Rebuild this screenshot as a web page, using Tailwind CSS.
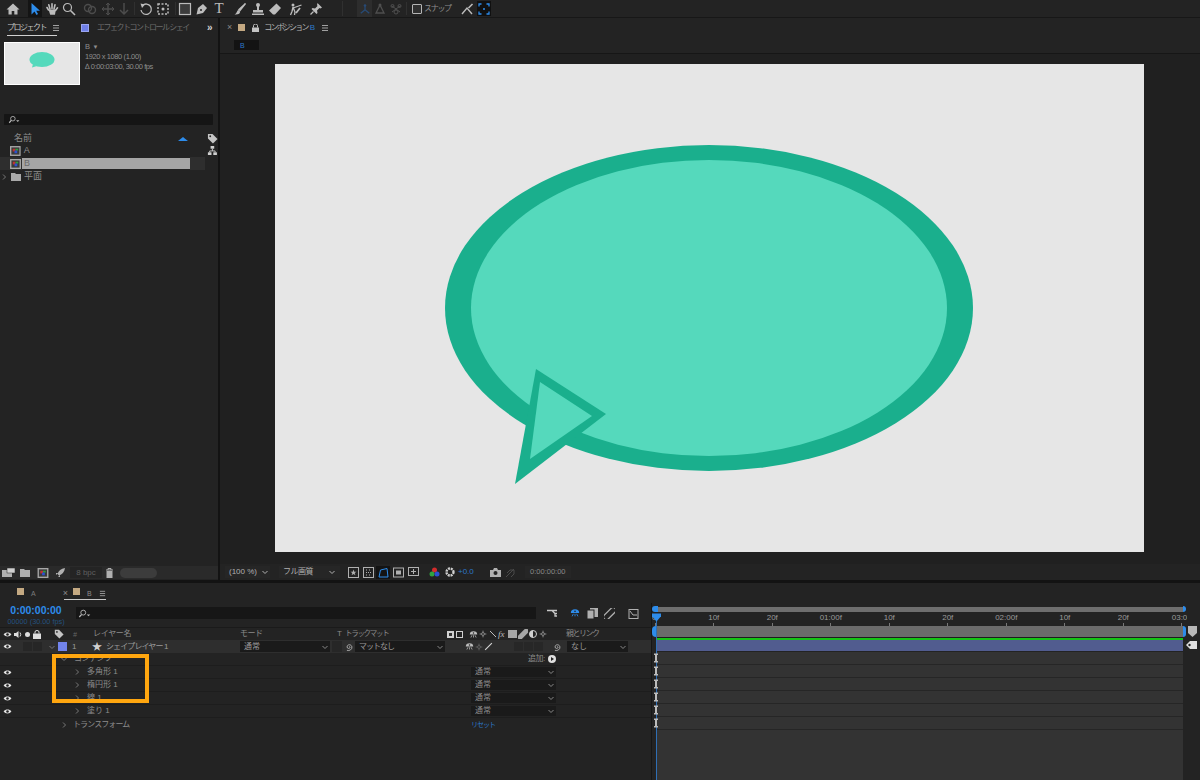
<!DOCTYPE html>
<html lang="ja">
<head>
<meta charset="UTF-8">
<title>After Effects</title>
<script src="https://cdn.jsdelivr.net/npm/@tailwindcss/browser@4"></script>
</head>
<body class="w-[1200px] h-[780px] overflow-hidden bg-[#232323] text-[#a0a0a0] text-[8px] leading-none font-['Liberation_Sans','Noto_Sans_CJK_JP',sans-serif] flex flex-col">

<!-- shared icons -->
<svg class="hidden">
  <symbol id="eye" viewBox="0 0 14 14"><path d="M1 7C3.500 3 10.500 3 13 7C10.500 11 3.500 11 1 7Z" fill="currentColor"/><circle cx="7" cy="7" r="2" fill="#222"/></symbol>
  <symbol id="chev" viewBox="0 0 8 8"><path d="M3 1.500L5.500 4L3 6.500" fill="none" stroke="currentColor"/></symbol>
  <symbol id="down" viewBox="0 0 8 8"><path d="M1.500 3L4 5.500L6.500 3" fill="none" stroke="currentColor"/></symbol>
  <symbol id="menu" viewBox="0 0 8 8"><path d="M1 1.500H7M1 4H7M1 6.500H7" stroke="currentColor"/></symbol>
  <symbol id="spiral" viewBox="0 0 12 12"><path d="M6 6C7 5 8 6.500 6.500 7.500C4.500 8.500 3 6.500 4 4.500C5.500 2.500 9 3 9.500 6C9.800 9 6.500 11 3.500 10" fill="none" stroke="currentColor"/></symbol>
  <symbol id="shy" viewBox="0 0 12 12"><path d="M1 6A5 4.500 0 0 1 11 6Z" fill="currentColor"/><path d="M4 7L2.500 10M8 7L9.500 10M6 7V10" stroke="currentColor"/><circle cx="6" cy="4" r="1" fill="#222"/></symbol>
  <symbol id="sun" viewBox="0 0 12 12"><circle cx="6" cy="6" r="2.200" fill="none" stroke="currentColor"/><path d="M6 1V3M6 9V11M1 6H3M9 6H11" stroke="currentColor"/></symbol>
  <symbol id="search" viewBox="0 0 16 10"><circle cx="6" cy="4" r="2.800" fill="none" stroke="currentColor"/><path d="M4 6.200L1.500 9" stroke="currentColor" stroke-width="1.400"/><path d="M10 6H14L12 8Z" fill="currentColor"/></symbol>
  <symbol id="comp" viewBox="0 0 12 11"><rect width="12" height="11" fill="#a8a8a8"/><rect x="1.500" y="1.500" width="9" height="8" fill="#3a3a3a"/><rect x="3" y="3" width="3" height="3" fill="#c03030"/><rect x="6" y="3" width="3" height="2" fill="#2f9f3f"/><rect x="5" y="5" width="3" height="3" fill="#2c50d0"/></symbol>
  <symbol id="key" viewBox="0 0 6 10"><path d="M1 .5H5V2H4V8H5V9.500H1V8H2V2H1Z" fill="currentColor"/></symbol>
</svg>

<!-- tool bar -->
<div class="h-[17px] shrink-0 flex items-center text-[#bcbcbc] border-b border-[#171717] box-content">
  <svg class="ml-[6px] w-[14px] h-[14px]" viewBox="0 0 14 14"><path d="M7 1.500L13.500 7.500H11.500V12.500H8.300V9H5.700V12.500H2.500V7.500H.5Z" fill="currentColor"/></svg>
  <span class="ml-[8px] w-[14px] h-[17px] bg-[#141414] flex items-center justify-center">
    <svg class="w-[14px] h-[14px]" viewBox="0 0 14 14"><path d="M3.500 1V12.500L6.500 9.500L8.500 13L10 12L8.200 8.800H12Z" fill="#2d8ceb"/></svg>
  </span>
  <svg class="ml-[3px] w-[14px] h-[14px]" viewBox="0 0 14 14"><path d="M3.500 8L2 5.500M5 7L3.800 2.800M7 6.500V1.800M9 7L10 2.800M10.500 8.500L12.500 5.800" stroke="currentColor" stroke-width="1.600" stroke-linecap="round"/><path d="M3.500 7.500H10.800L10 12.800H5.200Z" fill="currentColor"/></svg>
  <svg class="ml-[3px] w-[14px] h-[14px]" viewBox="0 0 14 14"><circle cx="5.500" cy="5.500" r="4" fill="none" stroke="currentColor" stroke-width="1.200"/><path d="M8.500 8.500L13 13" stroke="currentColor" stroke-width="1.600"/></svg>
  <svg class="ml-[7px] w-[14px] h-[14px] text-[#4c4c4c]" viewBox="0 0 14 14"><circle cx="5" cy="6" r="3.500" fill="none" stroke="currentColor" stroke-width="1.400"/><circle cx="9" cy="8" r="3.500" fill="none" stroke="currentColor" stroke-width="1.400"/></svg>
  <svg class="ml-[4px] w-[14px] h-[14px] text-[#4c4c4c]" viewBox="0 0 14 14"><path d="M7 1V13M1 7H13" stroke="currentColor" stroke-width="1.500"/><path d="M5 3L7 1L9 3M5 11L7 13L9 11M3 5L1 7L3 9M11 5L13 7L11 9" fill="none" stroke="currentColor"/></svg>
  <svg class="ml-[2px] w-[14px] h-[14px] text-[#4c4c4c]" viewBox="0 0 14 14"><path d="M7 1V11M3 8L7 12L11 8" fill="none" stroke="currentColor" stroke-width="1.500"/></svg>
  <div class="ml-[3px] w-px h-[13px] bg-[#303030]"></div>
  <svg class="ml-[4px] w-[14px] h-[14px]" viewBox="0 0 14 14"><path d="M3.500 3.500A5.200 5.200 0 1 1 2 8" fill="none" stroke="currentColor" stroke-width="1.300"/><path d="M1.500 1.500L6 2.500L3 6Z" fill="currentColor"/></svg>
  <svg class="ml-[3px] w-[14px] h-[14px]" viewBox="0 0 14 14"><rect x="2" y="2" width="10" height="10" fill="none" stroke="currentColor" stroke-width="1.500" stroke-dasharray="2 1.500"/><circle cx="7" cy="7" r="1.500" fill="currentColor"/></svg>
  <div class="ml-[5px] w-px h-[13px] bg-[#303030]"></div>
  <svg class="ml-[2px] w-[14px] h-[14px]" viewBox="0 0 14 14"><rect x="1.500" y="1.500" width="11" height="11" fill="#3c3c3c" stroke="currentColor" stroke-width="1.200"/></svg>
  <svg class="ml-[3px] w-[14px] h-[14px]" viewBox="0 0 14 14"><path d="M1.500 12.500L3 6L8 2L12 6L8 11Z" fill="currentColor"/><circle cx="6" cy="8" r="1" fill="#222"/></svg>
  <span class="ml-[3px] w-[14px] text-center text-[15px] font-['Liberation_Serif',serif]">T</span>
  <svg class="ml-[7px] w-[14px] h-[14px]" viewBox="0 0 14 14"><path d="M12.500 1.500L6 7.500L7 8.500Z" fill="currentColor" stroke="currentColor" stroke-width="1.400"/><path d="M5.500 8C3.500 8.500 4.500 11 1.500 12.500C5 13 7.500 11.500 7 9.500Z" fill="currentColor"/></svg>
  <svg class="ml-[4px] w-[14px] h-[14px]" viewBox="0 0 14 14"><circle cx="7" cy="3" r="2" fill="currentColor"/><path d="M6 4H8V8H12V10.500H2V8H6ZM1 11.500H13V13H1Z" fill="currentColor"/></svg>
  <svg class="ml-[3px] w-[14px] h-[14px]" viewBox="0 0 14 14"><path d="M8.500 1.500L13 6L7 12.500H5L1 8.500Z" fill="currentColor"/></svg>
  <svg class="ml-[7px] w-[14px] h-[14px]" viewBox="0 0 14 14"><circle cx="4" cy="3" r="1.500" fill="currentColor"/><path d="M4 5L3 9.500L1.500 13M4 5L6 10L5.500 13M4 6L12.500 3" fill="none" stroke="currentColor" stroke-width="1.300"/><path d="M7 11L11 6" stroke="currentColor" stroke-width="1.800"/></svg>
  <svg class="ml-[6px] w-[14px] h-[14px]" viewBox="0 0 14 14"><path d="M8.500 1L13 5.500L11.500 6.500L10.500 6L8 8.500L8.500 11L7.500 12L2.500 7L3.500 6L6 6.500L8.500 4L8 3Z" fill="currentColor"/><path d="M4.500 9.500L1.500 12.500" stroke="currentColor" stroke-width="1.300"/></svg>
  <div class="ml-[19px] w-px h-[15px] bg-[#303030]"></div>
  <span class="ml-[14px] w-[15px] h-[17px] bg-[#2d2d2d] flex items-center justify-center">
    <svg class="w-[12px] h-[12px] text-[#274a75]" viewBox="0 0 14 14"><path d="M7 3V8L2 12M7 8L12 12" fill="none" stroke="currentColor" stroke-width="1.500"/><circle cx="7" cy="3" r="1.500" fill="currentColor"/></svg>
  </span>
  <svg class="ml-[1px] w-[14px] h-[14px] text-[#4f4f4f]" viewBox="0 0 14 14"><path d="M7 3L3 11H11Z" fill="none" stroke="currentColor" stroke-width="1.300"/><circle cx="7" cy="3" r="1.500" fill="currentColor"/></svg>
  <svg class="ml-[2px] w-[14px] h-[14px] text-[#4f4f4f]" viewBox="0 0 14 14"><path d="M3 4L11 10M11 4L3 10" stroke="currentColor"/><circle cx="3.500" cy="4" r="1.500" fill="none" stroke="currentColor"/><circle cx="10.500" cy="4" r="1.500" fill="none" stroke="currentColor"/><circle cx="7" cy="10" r="2" fill="none" stroke="currentColor"/></svg>
  <div class="ml-[3px] w-px h-[13px] bg-[#303030]"></div>
  <span class="ml-[5px] w-[10px] h-[10px] border-[1.500px] border-[#b5b5b5] rounded-[1px] bg-[#303030]"></span>
  <span class="ml-[2px] text-[8px] tracking-[-1.300px] text-[#8c8c8c]">スナップ</span>
  <svg class="ml-[9px] w-[14px] h-[14px]" viewBox="0 0 14 14"><path d="M2 12L7 6L12 12" fill="none" stroke="currentColor" stroke-width="1.400"/><path d="M8.500 6L12.500 2" stroke="currentColor" stroke-width="1.600"/></svg>
  <span class="ml-[3px] w-[14px] h-[15px] bg-[#101010] flex items-center justify-center">
    <svg class="w-[12px] h-[12px] text-[#2d8ceb]" viewBox="0 0 12 12"><path d="M1 3.500V1H3.500M8.500 1H11V3.500M1 8.500V11H3.500M8.500 11H11V8.500" fill="none" stroke="currentColor" stroke-width="1.300"/><circle cx="6" cy="6" r="1" fill="currentColor"/></svg>
  </span>
</div>

<!-- project panel + viewer -->
<div class="h-[562px] shrink-0 flex">
  <div class="w-[218px] shrink-0 flex flex-col">
    <div class="h-[19px] flex items-center relative">
      <span class="ml-[7px] w-[45px] text-[#c4c4c4] tracking-[-1.500px]">プロジェクト</span>
      <svg class="w-[8px] h-[8px]"><use href="#menu"/></svg>
      <span class="absolute left-[7px] top-[17px] w-[50px] h-px bg-[#d0d0d0]"></span>
      <span class="ml-[21px] w-[8px] h-[8px] bg-[#6f7fe8] border border-[#9aa5f0]"></span>
      <span class="ml-[8px] w-[94px] whitespace-nowrap text-[#6c6c6c] tracking-[-1.500px]">エフェクトコントロール シェイ</span>
      <span class="ml-[16px] text-[#d0d0d0] text-[10px] font-bold tracking-[-1px]">»</span>
    </div>
    <div class="mt-[5px] flex">
      <div class="ml-[4px] w-[76px] h-[43px] bg-[#e6e6e6] border border-white flex items-center justify-center">
        <svg class="w-[26px] h-[17px] -mt-[6px]" viewBox="0 0 26 17"><path d="M4 12L3 15.500L8 14Z" fill="#55d9bc"/><ellipse cx="13" cy="7.500" rx="12.500" ry="7.500" fill="#55d9bc"/></svg>
      </div>
      <div class="ml-[5px] flex flex-col text-[7.500px] tracking-[-.4px] text-[#8e8e8e]">
        <span class="h-[10px] flex items-center">B <span class="ml-[3px] text-[6px]">▼</span></span>
        <span class="h-[10px] flex items-center">1920 x 1080 (1.00)</span>
        <span class="h-[10px] flex items-center">∆ 0:00:03:00, 30.00 fps</span>
      </div>
    </div>
    <div class="mt-[29px] ml-[4px] w-[209px] h-[11px] bg-[#151515] rounded-[1px] flex items-center text-[#bdbdbd]">
      <svg class="ml-[4px] w-[13px] h-[9px]"><use href="#search"/></svg>
    </div>
    <div class="mt-[7px] h-[12px] flex items-center">
      <span class="ml-[14px] text-[9px] text-[#8a8a8a] w-[165px]">名前</span>
      <svg class="w-[10px] h-[5px]" viewBox="0 0 10 5"><path d="M0 5H10L5 1Z" fill="#2d8ceb"/></svg>
      <svg class="ml-[19px] w-[11px] h-[11px] shrink-0 text-[#c4c4c4]" viewBox="0 0 12 12"><path d="M1 1H6L11.500 6.500L6.500 11.500L1 6Z" fill="currentColor"/><circle cx="3.500" cy="3.500" r="1" fill="#222"/></svg>
    </div>
    <div class="h-[13px] flex items-center">
      <svg class="ml-[10px] w-[11px] h-[10px]"><use href="#comp"/></svg>
      <span class="ml-[3px] w-[187px] text-[#8e8e8e] text-[9px]">A</span>
      <svg class="w-[11px] h-[11px] text-[#d0d0d0]" viewBox="0 0 12 12"><rect x="4" y="1" width="4" height="3" fill="currentColor"/><rect x="1" y="8" width="4" height="3" fill="currentColor"/><rect x="7" y="8" width="4" height="3" fill="currentColor"/><path d="M6 4V6.500M3 8V6.500H9V8" fill="none" stroke="currentColor"/></svg>
    </div>
    <div class="h-[13px] w-[205px] flex items-center bg-[#2e2e2e]">
      <svg class="ml-[10px] w-[11px] h-[10px]"><use href="#comp"/></svg>
      <span class="ml-[1px] w-[168px] h-[13px] pl-[2px] bg-[#a5a5a5] border-y border-[#232323] text-[#6a6a6a] text-[9px] flex items-center">B</span>
    </div>
    <div class="h-[13px] flex items-center">
      <svg class="ml-[0px] w-[8px] h-[8px] text-[#777]"><use href="#chev"/></svg>
      <svg class="ml-[3px] w-[10px] h-[9px] text-[#a9a9a9]" viewBox="0 0 10 9"><path d="M0 1H4L5 2H10V9H0Z" fill="currentColor"/></svg>
      <span class="ml-[3px] text-[9px] text-[#8e8e8e]">平面</span>
    </div>
    <!-- panel footer -->
    <div class="mt-auto h-[13px] mb-[1px] flex items-center bg-[#2a2a2a] text-[#b0b0b0]">
      <svg class="ml-[2px] w-[13px] h-[9px]" viewBox="0 0 13 9"><rect y="2" width="10" height="7" fill="currentColor"/><rect x="5" width="8" height="5" fill="#d0d0d0" stroke="#222" stroke-width=".5"/></svg>
      <svg class="ml-[5px] w-[10px] h-[9px]" viewBox="0 0 10 9"><path d="M0 1H4L5 2H10V9H0Z" fill="currentColor"/></svg>
      <svg class="ml-[7px] w-[12px] h-[10px]"><use href="#comp"/></svg>
      <svg class="ml-[6px] w-[10px] h-[10px]" viewBox="0 0 10 10"><path d="M10 0C6 .5 3.500 3 2.500 6L4 7.500C7 6.500 9.500 4 10 0ZM1 5H3L1 7ZM5 9V7L3 9Z" fill="currentColor"/></svg>
      <span class="ml-[5px] w-[32px] h-[11px] bg-[#242424] text-[#5f5f5f] flex items-center justify-center">8 bpc</span>
      <svg class="ml-[3px] w-[9px] h-[10px]" viewBox="0 0 9 10"><path d="M1 2H8M3 2V.5H6V2" fill="none" stroke="currentColor"/><path d="M1.500 3H7.500V10H1.500Z" fill="currentColor"/></svg>
      <span class="ml-[6px] w-[37px] h-[10px] rounded-full bg-[#3c3c3c]"></span>
    </div>
  </div>

  <div class="w-[2px] shrink-0 bg-[#131313]"></div>

  <div class="flex-1 flex flex-col">
    <div class="h-[19px] flex items-center">
      <span class="ml-[7px] text-[#8a8a8a] text-[9px]">×</span>
      <span class="ml-[6px] w-[7px] h-[7px] bg-[#c4a982]"></span>
      <svg class="ml-[7px] w-[7px] h-[8px] text-[#c4c4c4]" viewBox="0 0 7 8"><rect y="3.500" width="7" height="4.500" fill="currentColor"/><path d="M1.500 3.500V1.500A2 1.500 0 0 1 5.500 1.500V3.500" fill="none" stroke="currentColor"/></svg>
      <span class="ml-[5px] text-[#b4b4b4] tracking-[-1.800px]">コンポジション</span>
      <span class="ml-[2px] text-[#2d78c8]">B</span>
      <svg class="ml-[6px] w-[8px] h-[8px]"><use href="#menu"/></svg>
    </div>
    <div class="h-[17px] border-b border-[#161616] flex items-center">
      <span class="ml-[14px] w-[25px] h-[10px] bg-[#131313] text-[#2d78c8] text-[7px] pl-[6px] flex items-center">B</span>
    </div>
    <div class="flex-1 bg-[#202020] pt-[10px] pl-[55px]">
      <svg class="w-[869px] h-[488px] bg-[#e6e6e6]" viewBox="0 0 869 488">
        <ellipse cx="434" cy="244" rx="264" ry="163" fill="#1aaf8d"/>
        <ellipse cx="434" cy="244" rx="238" ry="148" fill="#55d9bc"/>
        <polygon points="261,305 331,350 240,420" fill="#1aaf8d"/>
        <polygon points="265,318 317,352 255,395" fill="#55d9bc"/>
      </svg>
    </div>
    <!-- viewer footer -->
    <div class="h-[16px] shrink-0 flex items-center text-[#b0b0b0] bg-[#232323]">
      <span class="ml-[5px] w-[45px] h-[12px] bg-[#262626] pl-[4px] flex items-center justify-between text-[8px]">(100 %)<svg class="w-[8px] h-[8px] mr-[1px]"><use href="#down"/></svg></span>
      <span class="ml-[9px] w-[61px] h-[12px] bg-[#262626] pl-[4px] flex items-center justify-between tracking-[-.5px]">フル画質<svg class="w-[8px] h-[8px] mr-[4px]"><use href="#down"/></svg></span>
      <svg class="ml-[8px] w-[11px] h-[11px]" viewBox="0 0 11 11"><rect x=".5" y=".5" width="10" height="10" fill="none" stroke="currentColor"/><path d="M5.500 2.500L6.300 4.700H8.500L6.700 6L7.400 8.300L5.500 7L3.600 8.300L4.300 6L2.500 4.700H4.700Z" fill="currentColor"/></svg>
      <svg class="ml-[4px] w-[11px] h-[11px]" viewBox="0 0 11 11"><rect x=".5" y=".5" width="10" height="10" fill="none" stroke="currentColor"/><path d="M3 3H5M6 3H8M3 5.500H8M3 8H5M6 8H8" stroke="currentColor" stroke-dasharray="1 1"/></svg>
      <span class="ml-[2px] w-[14px] h-[13px] bg-[#141414] flex items-center justify-center"><svg class="w-[11px] h-[11px] text-[#2d8ceb]" viewBox="0 0 11 11"><path d="M1 10L2.500 3L9 1.500L10 10Z" fill="none" stroke="currentColor"/></svg></span>
      <svg class="ml-[3px] w-[11px] h-[11px]" viewBox="0 0 11 11"><rect x=".5" y="1" width="10" height="9" fill="none" stroke="currentColor"/><rect x="3" y="3.500" width="5" height="4" fill="currentColor"/></svg>
      <svg class="ml-[4px] w-[11px] h-[11px]" viewBox="0 0 11 11"><rect x=".5" y=".5" width="10" height="8" fill="none" stroke="currentColor"/><path d="M5.500 2V7M3 4.500H8" stroke="currentColor"/></svg>
      <svg class="ml-[10px] w-[11px] h-[11px]" viewBox="0 0 11 11"><circle cx="5.500" cy="3" r="2.500" fill="#d32c2c"/><circle cx="3" cy="7" r="2.500" fill="#2fa33f"/><circle cx="8" cy="7" r="2.500" fill="#2c50d0"/></svg>
      <svg class="ml-[5px] w-[10px] h-[10px] text-[#d0d0d0]" viewBox="0 0 10 10"><circle cx="5" cy="5" r="3.500" fill="none" stroke="currentColor" stroke-width="2.400" stroke-dasharray="2 .8"/></svg>
      <span class="ml-[3px] text-[#2d78c8]">+0.0</span>
      <svg class="ml-[16px] w-[11px] h-[9px]" viewBox="0 0 11 9"><path d="M0 2H3L4 0H7L8 2H11V9H0Z" fill="currentColor"/><circle cx="5.500" cy="5" r="2" fill="#232323"/></svg>
      <svg class="ml-[4px] w-[11px] h-[11px] text-[#4a4a4a]" viewBox="0 0 11 11"><path d="M1 10L9 2M2 6L5 3H9V7L6 10" fill="none" stroke="currentColor"/></svg>
      <span class="ml-[9px] w-[46px] h-[12px] bg-[#262626] text-[#8a8a8a] text-[7.500px] flex items-center justify-center">0:00:00:00</span>
    </div>
  </div>
</div>

<div class="h-[3px] shrink-0 bg-[#131313]"></div>

<!-- timeline tabs -->
<div class="h-[20px] shrink-0 flex items-center relative">
  <span class="ml-[17px] w-[7px] h-[7px] bg-[#c4a982] -mt-[3px]"></span>
  <span class="ml-[7px] text-[#7c7c7c] text-[7px]">A</span>
  <span class="ml-[27px] text-[#8a8a8a] text-[9px]">×</span>
  <span class="ml-[5px] w-[7px] h-[7px] bg-[#c4a982] -mt-[3px]"></span>
  <span class="ml-[7px] text-[#8a8a8a] text-[7px]">B</span>
  <svg class="ml-[7px] w-[7px] h-[7px]"><use href="#menu"/></svg>
  <span class="absolute left-[64px] top-[16px] w-[42px] h-px bg-[#c8c8c8]"></span>
</div>

<div class="flex-1 flex relative">
  <!-- layer outline -->
  <div class="w-[651px] shrink-0 flex flex-col">
    <div class="h-[24px] flex">
      <div class="w-[76px] flex flex-col items-center -ml-[0px]">
        <span class="mt-[1px] h-[13px] pr-[4px] flex items-center text-[#2d8ceb] text-[10.500px] font-bold">0:00:00:00</span>
        <span class="h-[9px] pr-[4px] flex items-center text-[#23527f] text-[7.300px] whitespace-nowrap">00000 (30.00 fps)</span>
      </div>
      <div class="mt-[4px] w-[460px] h-[12px] bg-[#161616] flex items-center text-[#bdbdbd]">
        <svg class="ml-[2px] w-[14px] h-[9px]"><use href="#search"/></svg>
      </div>
      <svg class="ml-[10px] mt-[5px] w-[12px] h-[10px] text-[#c8c8c8]" viewBox="0 0 12 10"><path d="M1 2.500H6L9 5.500H11M6 2.500H11M9 5.500V8H11" fill="none" stroke="currentColor" stroke-width="1.300"/></svg>
      <svg class="ml-[11px] mt-[5px] w-[12px] h-[10px] text-[#2d8ceb]"><use href="#shy"/></svg>
      <svg class="ml-[6px] mt-[5px] w-[11px] h-[11px] text-[#b0b0b0]" viewBox="0 0 11 11"><rect x="3" y="0" width="8" height="9" fill="currentColor"/><rect x="0" y="2" width="7" height="9" fill="currentColor" stroke="#232323"/></svg>
      <svg class="ml-[6px] mt-[5px] w-[11px] h-[11px] text-[#b0b0b0]" viewBox="0 0 11 11"><rect x="-2" y="3" width="15" height="5.500" rx="2.700" transform="rotate(-45 5.500 5.500)" fill="none" stroke="currentColor" stroke-width="1.300"/></svg>
      <svg class="ml-[13px] mt-[5px] w-[11px] h-[11px] text-[#b0b0b0]" viewBox="0 0 11 11"><rect x="1" y="1.500" width="9" height="9" fill="none" stroke="currentColor"/><path d="M2 3L5 7H9" fill="none" stroke="currentColor"/></svg>
    </div>
    <!-- column header -->
    <div class="h-[13px] flex items-center text-[#8a8a8a] border-t border-[#1a1a1a]">
      <svg class="ml-[3px] w-[9px] h-[9px] text-[#ddd]"><use href="#eye"/></svg>
      <svg class="ml-[1px] w-[9px] h-[9px] text-[#ddd]" viewBox="0 0 9 9"><path d="M1 3H3L5.500 1V8L3 6H1Z" fill="currentColor"/><path d="M7 2.500Q8.500 4.500 7 6.500" fill="none" stroke="currentColor"/></svg>
      <span class="ml-[3px] w-[5px] h-[5px] rounded-full bg-[#ddd]"></span>
      <svg class="ml-[3px] w-[8px] h-[9px] text-[#ddd]" viewBox="0 0 8 9"><rect y="3.500" width="8" height="5.500" fill="currentColor"/><path d="M2 3.500V2A2 1.500 0 0 1 6 2V3.500" fill="none" stroke="currentColor"/></svg>
      <svg class="ml-[13px] w-[10px] h-[10px] text-[#c4c4c4]" viewBox="0 0 12 12"><path d="M1 1H6L11.500 6.500L6.500 11.500L1 6Z" fill="currentColor"/><circle cx="3.500" cy="3.500" r="1" fill="#222"/></svg>
      <span class="ml-[9px] w-[5px] text-[7px] text-[#666] italic">#</span>
      <span class="ml-[15px] w-[147px] tracking-[-.3px]">レイヤー名</span>
      <span class="w-[97px] tracking-[-.5px]">モード</span>
      <span class="w-[8px] text-[#8a8a8a]">T</span>
      <span class="w-[102px] text-[7.500px] tracking-[-1.300px]">トラックマット</span>
      <span class="w-[7px] h-[7px] border-[2px] border-[#d0d0d0] bg-[#333]"></span>
      <span class="ml-[2px] w-[7px] h-[7px] border border-[#d0d0d0]"></span>
      <svg class="ml-[6px] w-[9px] h-[9px] text-[#bdbdbd]"><use href="#shy"/></svg>
      <svg class="ml-[1px] w-[8px] h-[8px] text-[#bdbdbd]"><use href="#sun"/></svg>
      <svg class="ml-[2px] w-[8px] h-[8px] text-[#bdbdbd]" viewBox="0 0 8 8"><path d="M1 1L7 7" stroke="currentColor"/></svg>
      <span class="ml-[1px] w-[9px] font-['Liberation_Serif',serif] italic text-[9px] text-[#bdbdbd]">fx</span>
      <span class="ml-[1px] w-[9px] h-[8px] bg-[#a5a5a5]"></span>
      <svg class="ml-[1px] w-[10px] h-[10px] text-[#a5a5a5]" viewBox="0 0 11 11"><rect x="-2" y="3" width="15" height="5.500" rx="2.700" transform="rotate(-45 5.500 5.500)" fill="currentColor"/></svg>
      <svg class="ml-[1px] w-[8px] h-[8px] text-[#d0d0d0]" viewBox="0 0 8 8"><circle cx="4" cy="4" r="3.500" fill="none" stroke="currentColor"/><path d="M4 .5A3.500 3.500 0 0 0 4 7.500Z" fill="currentColor"/></svg>
      <svg class="ml-[2px] w-[8px] h-[8px] text-[#bdbdbd]"><use href="#sun"/></svg>
      <span class="ml-[19px] tracking-[-1.500px] whitespace-nowrap">親とリンク</span>
    </div>
    <!-- shape layer -->
    <div class="h-[13px] flex items-center bg-[#2e2e2e] text-[#9a9a9a]">
      <svg class="ml-[3px] w-[9px] h-[9px] text-[#e4e4e4]"><use href="#eye"/></svg>
      <span class="ml-[11px] w-[9px] h-[9px] bg-[#262626]"></span>
      <span class="ml-[1px] w-[9px] h-[9px] bg-[#262626]"></span>
      <svg class="ml-[6px] w-[8px] h-[8px] text-[#777]"><use href="#down"/></svg>
      <span class="ml-[2px] w-[9px] h-[9px] bg-[#7284ec]"></span>
      <span class="ml-[5px] w-[20px] text-[8px]">1</span>
      <span class="text-[#d0d0d0] text-[10px] w-[14px]">★</span>
      <span class="w-[134px] tracking-[-.9px] whitespace-nowrap">シェイプレイヤー 1</span>
      <span class="w-[90px] h-[11px] pl-[4px] pr-[1px] bg-[#1a1a1a] flex items-center justify-between">通常<svg class="w-[8px] h-[8px] text-[#888]"><use href="#down"/></svg></span>
      <span class="ml-[2px] w-[10px] h-[11px] bg-[#262626]"></span>
      <svg class="ml-[2px] w-[10px] h-[10px] text-[#bdbdbd]"><use href="#spiral"/></svg>
      <span class="ml-[1px] w-[90px] h-[11px] pl-[4px] pr-[1px] bg-[#1a1a1a] flex items-center justify-between tracking-[-1px]">マットなし<svg class="w-[8px] h-[8px] text-[#888]"><use href="#down"/></svg></span>
      <svg class="ml-[20px] w-[9px] h-[9px] text-[#bdbdbd]"><use href="#shy"/></svg>
      <svg class="ml-[1px] w-[8px] h-[8px] text-[#777]"><use href="#sun"/></svg>
      <svg class="ml-[1px] w-[9px] h-[9px] text-[#d8d8d8]" viewBox="0 0 8 8"><path d="M1 7L7 1" stroke="currentColor"/></svg>
      <span class="ml-[21px] w-[9px] h-[9px] bg-[#272727]"></span>
      <span class="ml-[1px] w-[9px] h-[9px] bg-[#272727]"></span>
      <span class="ml-[1px] w-[9px] h-[9px] bg-[#272727]"></span>
      <svg class="ml-[9px] w-[10px] h-[10px] text-[#bdbdbd]"><use href="#spiral"/></svg>
      <span class="ml-[5px] w-[61px] h-[11px] pl-[4px] pr-[1px] bg-[#1a1a1a] flex items-center justify-between">なし<svg class="w-[8px] h-[8px] text-[#888]"><use href="#down"/></svg></span>
    </div>
    <!-- property rows -->
    <div class="h-[13px] flex items-center text-[#8c8c8c] border-b border-[#1d1d1d]">
      <svg class="ml-[60px] w-[8px] h-[8px] text-[#777]"><use href="#down"/></svg>
      <span class="ml-[6px] w-[454px] tracking-[-.5px]">コンテンツ</span>
      <span class="tracking-[-.5px]">追加:</span>
      <span class="ml-[3px] w-[8px] h-[8px] rounded-full bg-[#e0e0e0] flex items-center justify-center"><svg class="w-[4px] h-[4px]" viewBox="0 0 4 4"><path d="M1 0L4 2L1 4Z" fill="#222"/></svg></span>
    </div>
    <div class="h-[13px] flex items-center text-[#8c8c8c] border-b border-[#1d1d1d]">
      <svg class="ml-[3px] w-[9px] h-[9px] text-[#e4e4e4]"><use href="#eye"/></svg>
      <svg class="ml-[61px] w-[8px] h-[8px] text-[#777]"><use href="#chev"/></svg>
      <span class="ml-[6px] w-[384px]">多角形 1</span>
      <span class="w-[85px] h-[10px] pl-[4px] pr-[1px] bg-[#1a1a1a] flex items-center justify-between">通常<svg class="w-[8px] h-[8px] text-[#888]"><use href="#down"/></svg></span>
    </div>
    <div class="h-[13px] flex items-center text-[#8c8c8c] border-b border-[#1d1d1d]">
      <svg class="ml-[3px] w-[9px] h-[9px] text-[#e4e4e4]"><use href="#eye"/></svg>
      <svg class="ml-[61px] w-[8px] h-[8px] text-[#777]"><use href="#chev"/></svg>
      <span class="ml-[6px] w-[384px]">楕円形 1</span>
      <span class="w-[85px] h-[10px] pl-[4px] pr-[1px] bg-[#1a1a1a] flex items-center justify-between">通常<svg class="w-[8px] h-[8px] text-[#888]"><use href="#down"/></svg></span>
    </div>
    <div class="h-[13px] flex items-center text-[#8c8c8c] border-b border-[#1d1d1d]">
      <svg class="ml-[3px] w-[9px] h-[9px] text-[#e4e4e4]"><use href="#eye"/></svg>
      <svg class="ml-[61px] w-[8px] h-[8px] text-[#777]"><use href="#chev"/></svg>
      <span class="ml-[6px] w-[384px]">線 1</span>
      <span class="w-[85px] h-[10px] pl-[4px] pr-[1px] bg-[#1a1a1a] flex items-center justify-between">通常<svg class="w-[8px] h-[8px] text-[#888]"><use href="#down"/></svg></span>
    </div>
    <div class="h-[13px] flex items-center text-[#8c8c8c] border-b border-[#1d1d1d]">
      <svg class="ml-[3px] w-[9px] h-[9px] text-[#e4e4e4]"><use href="#eye"/></svg>
      <svg class="ml-[61px] w-[8px] h-[8px] text-[#777]"><use href="#chev"/></svg>
      <span class="ml-[6px] w-[384px]">塗り 1</span>
      <span class="w-[85px] h-[10px] pl-[4px] pr-[1px] bg-[#1a1a1a] flex items-center justify-between">通常<svg class="w-[8px] h-[8px] text-[#888]"><use href="#down"/></svg></span>
    </div>
    <div class="h-[13px] flex items-center text-[#8c8c8c]">
      <svg class="ml-[60px] w-[8px] h-[8px] text-[#777]"><use href="#chev"/></svg>
      <span class="ml-[5px] w-[398px] tracking-[-.9px]">トランスフォーム</span>
      <span class="text-[#2d78c8] text-[7px] tracking-[-1px]">リセット</span>
    </div>
  </div>

  <!-- time graph -->
  <div class="flex-1 flex flex-col relative border-l border-[#161616] overflow-hidden">
    <div class="mt-[3px] h-[6px] flex items-center">
      <span class="w-[6px] h-[6px] rounded-l-full bg-[#2d8ceb]"></span>
      <span class="w-[525px] h-[5px] bg-[#6e6e6e]"></span>
      <span class="w-[3px] h-[6px] rounded-r-full bg-[#2d8ceb]"></span>
    </div>
    <div class="w-[535px] h-[14px] overflow-hidden flex text-[#9a9a9a] text-[8px]">
      <div class="shrink-0 w-[58.500px] -ml-[26px] flex flex-col items-center"><span class="h-[11px] flex items-center">0f</span><span class="w-px h-[3px] bg-[#777]"></span></div>
      <div class="shrink-0 w-[58.500px] flex flex-col items-center"><span class="h-[11px] flex items-center">10f</span><span class="w-px h-[3px] bg-[#777]"></span></div>
      <div class="shrink-0 w-[58.500px] flex flex-col items-center"><span class="h-[11px] flex items-center">20f</span><span class="w-px h-[3px] bg-[#777]"></span></div>
      <div class="shrink-0 w-[58.500px] flex flex-col items-center"><span class="h-[11px] flex items-center">01:00f</span><span class="w-px h-[3px] bg-[#777]"></span></div>
      <div class="shrink-0 w-[58.500px] flex flex-col items-center"><span class="h-[11px] flex items-center">10f</span><span class="w-px h-[3px] bg-[#777]"></span></div>
      <div class="shrink-0 w-[58.500px] flex flex-col items-center"><span class="h-[11px] flex items-center">20f</span><span class="w-px h-[3px] bg-[#777]"></span></div>
      <div class="shrink-0 w-[58.500px] flex flex-col items-center"><span class="h-[11px] flex items-center">02:00f</span><span class="w-px h-[3px] bg-[#777]"></span></div>
      <div class="shrink-0 w-[58.500px] flex flex-col items-center"><span class="h-[11px] flex items-center">10f</span><span class="w-px h-[3px] bg-[#777]"></span></div>
      <div class="shrink-0 w-[58.500px] flex flex-col items-center"><span class="h-[11px] flex items-center">20f</span><span class="w-px h-[3px] bg-[#777]"></span></div>
      <div class="shrink-0 w-[58.500px] flex flex-col items-center"><span class="h-[11px] flex items-center">03:00</span><span class="w-px h-[3px] bg-[#777]"></span></div>
    </div>
    <div class="h-[11px] flex items-stretch">
      <span class="w-[4px] rounded-l-sm bg-[#2d8ceb]"></span>
      <span class="w-[527px] bg-[#6b6b6b]"></span>
      <span class="w-[3px] rounded-r-sm bg-[#2d8ceb]"></span>
      <svg class="ml-[1px] w-[11px] h-[11px] text-[#b8b8b8]" viewBox="0 0 11 11"><path d="M1 0H10V7L5.500 11L1 7Z" fill="currentColor"/></svg>
    </div>
    <div class="h-[2px] ml-[4px] w-[527px] bg-[#16c216] border-t border-[#1d1d1d] box-content"></div>
    <div class="h-[12px] flex items-start">
      <span class="ml-[4px] w-[527px] h-[11px] bg-[#515c8f]"></span>
      <svg class="ml-[3px] w-[11px] h-[10px] text-[#e0e0e0]" viewBox="0 0 11 10"><path d="M0 5L4 1H11V9H4Z" fill="currentColor"/><circle cx="3.500" cy="5" r="1.200" fill="#222"/></svg>
    </div>
    <div class="flex-1 ml-[4px] w-[527px] bg-[#333] flex flex-col">
      <div class="h-[13px] shrink-0 border-b border-[#262626] relative"><svg class="absolute z-10 left-[-3px] top-[1px] w-[6px] h-[10px] text-[#bcbcbc]"><use href="#key"/></svg></div>
      <div class="h-[13px] shrink-0 border-b border-[#262626] relative"><svg class="absolute z-10 left-[-3px] top-[1px] w-[6px] h-[10px] text-[#bcbcbc]"><use href="#key"/></svg></div>
      <div class="h-[13px] shrink-0 border-b border-[#262626] relative"><svg class="absolute z-10 left-[-3px] top-[1px] w-[6px] h-[10px] text-[#bcbcbc]"><use href="#key"/></svg></div>
      <div class="h-[13px] shrink-0 border-b border-[#262626] relative"><svg class="absolute z-10 left-[-3px] top-[1px] w-[6px] h-[10px] text-[#bcbcbc]"><use href="#key"/></svg></div>
      <div class="h-[13px] shrink-0 border-b border-[#262626] relative"><svg class="absolute z-10 left-[-3px] top-[1px] w-[6px] h-[10px] text-[#bcbcbc]"><use href="#key"/></svg></div>
      <div class="h-[13px] shrink-0 border-b border-[#262626] relative"><svg class="absolute z-10 left-[-3px] top-[1px] w-[6px] h-[10px] text-[#bcbcbc]"><use href="#key"/></svg></div>
    </div>
    <!-- playhead -->
    <span class="absolute left-[4px] top-[15px] bottom-0 w-px bg-[#2f6fb5]"></span>
    <svg class="absolute left-0 top-[10px] w-[9px] h-[9px]" viewBox="0 0 10 9"><path d="M0 0H10V3L5 9L0 3Z" fill="#2d8ceb"/></svg>
  </div>

  <!-- highlight from the article -->
  <div class="absolute left-[52px] top-[51px] w-[97px] h-[49px] border-[4px] border-[#ffa60f]"></div>
</div>

</body>
</html>
